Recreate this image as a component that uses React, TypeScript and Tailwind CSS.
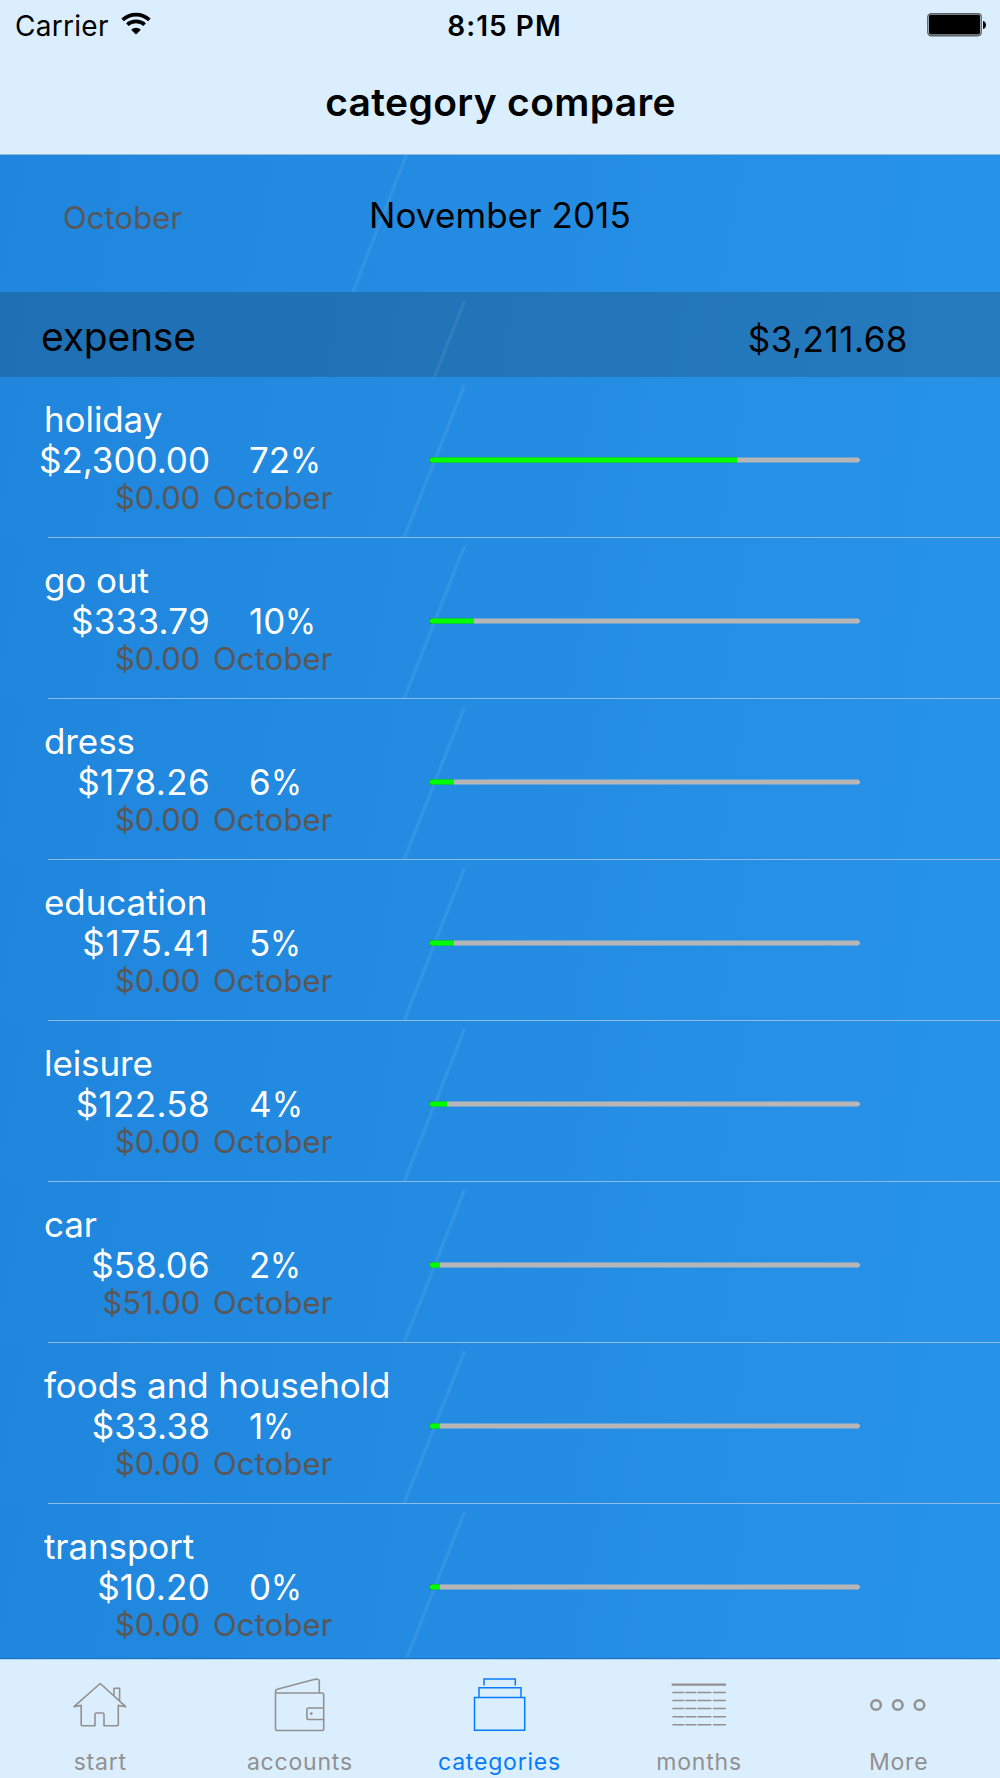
import React from "react";

type Category = {
  name: string;
  amount: string;
  percent: number;
  fill: number;
  previous: string;
  amountTracking: string;
};

const categories: Category[] = [
  { name: "holiday", amount: "$2,300.00", percent: 72, fill: 307, previous: "$0.00", amountTracking: "tracking-[-0.02px]" },
  { name: "go out", amount: "$333.79", percent: 10, fill: 44, previous: "$0.00", amountTracking: "tracking-[0.25px]" },
  { name: "dress", amount: "$178.26", percent: 6, fill: 24, previous: "$0.00", amountTracking: "tracking-[0.4px]" },
  { name: "education", amount: "$175.41", percent: 5, fill: 24, previous: "$0.00", amountTracking: "tracking-[0.7px]" },
  { name: "leisure", amount: "$122.58", percent: 4, fill: 17, previous: "$0.00", amountTracking: "tracking-[0.35px]" },
  { name: "car", amount: "$58.06", percent: 2, fill: 10, previous: "$51.00", amountTracking: "tracking-[0.2px]" },
  { name: "foods and household", amount: "$33.38", percent: 1, fill: 10, previous: "$0.00", amountTracking: "tracking-[0.17px]" },
  { name: "transport", amount: "$10.20", percent: 0, fill: 10, previous: "$0.00", amountTracking: "tracking-[0.24px]" },
];

/* Faint diagonal highlight of the wallpaper, repeated in every cell. */
function Streak({ d }: { d: string }) {
  return (
    <svg className="pointer-events-none absolute inset-0 h-full w-full" fill="none">
      <path d={d} stroke="#ffffff" strokeOpacity="0.075" strokeWidth="3.4" />
    </svg>
  );
}

function StatusBar() {
  return (
    <div className="grid h-[50px] grid-cols-3 text-[28px] leading-[50px]">
      <div className="flex pl-[15px] pt-px">
        <span className="tracking-[0.29px]">Carrier</span>
        <svg className="ml-[12px] mt-[11px]" width="30" height="24" viewBox="0 0 30 24" fill="none">
          <path d="M1.6 7.8C9.2 .9 20.8 .9 28.4 7.8" stroke="#000" strokeWidth="3.7" />
          <path d="M6.3 12.7C11.2 8.3 18.8 8.3 23.7 12.7" stroke="#000" strokeWidth="3.7" />
          <path d="M10.1 17.7C12.9 15 17.1 15 19.9 17.7L15 22.4Z" fill="#000" />
        </svg>
      </div>
      <div className="pl-[9px] pt-px text-center font-semibold tracking-[1.05px]">8:15 PM</div>
      <div className="flex justify-end pr-[14px]">
        <svg className="mt-[12px]" width="60" height="26" viewBox="0 0 60 26" fill="none">
          <rect x="1.8" y="1.7" width="53.4" height="22" rx="3.4" stroke="#5b6268" strokeWidth="1.4" />
          <rect x="3" y="2.8" width="51" height="19.8" rx="1.8" fill="#000" />
          <path d="M57 9C61 10 61 16 57 17Z" fill="#000" />
        </svg>
      </div>
    </div>
  );
}

function Row({ item }: { item: Category }) {
  return (
    <div className="relative flex h-[161px] shrink-0 bg-[linear-gradient(100deg,#2086dd,#2793e8)]">
      <Streak d="M464.5 8L404 161" />
      <div className="relative w-[430px] shrink-0 pt-[22px] text-[35px] text-white">
        <div className="whitespace-nowrap pl-[44px] leading-[40px] tracking-[-0.09px]">{item.name}</div>
        <div className="flex pt-px leading-[40px]">
          <div className={`w-[210px] text-right ${item.amountTracking}`}>{item.amount}</div>
          <div className="pl-[39px]">
            {item.percent}
            <span className="inline-block origin-left scale-x-90">%</span>
          </div>
        </div>
        <div className="flex text-[31px] leading-[36px] text-[#595757]">
          <div className="w-[200px] text-right tracking-[-0.2px]">{item.previous}</div>
          <div className="pl-[13px] tracking-[0.15px]">October</div>
        </div>
      </div>
      <div className="relative mt-[80px] flex h-[6px] w-[430px] bg-[#333f4a]">
        <div
          className="h-full rounded-l-[2px] border-y border-[#10c840] bg-[#00ff00]"
          style={{ width: item.fill }}
        />
        <div className="h-full flex-1 rounded-r-[2px] border-y border-[#6ca5d1] bg-[#b7b5b5]" />
      </div>
      <div className="absolute bottom-0 left-[48px] right-0 h-px bg-[#8ebce4]" />
    </div>
  );
}

function HomeIcon() {
  return (
    <svg width="60" height="60" viewBox="0 0 60 60" fill="none" stroke="currentColor" strokeWidth="1.6" strokeLinejoin="round">
      <path d="M30.2 9.5L4 32.7L11.2 31.4V50.7Q11.2 51.7 12.2 51.7H25V40.4Q25 39 26.4 39H32.6Q34 39 34 40.4V51.7H47.3Q48.3 51.7 48.3 50.7V31.4L55.7 32.7Z" />
      <path d="M44 21.3V14.2H49.6V26.8" />
    </svg>
  );
}

function WalletIcon() {
  return (
    <svg width="60" height="60" viewBox="0 0 60 60" fill="none" stroke="currentColor" strokeWidth="1.6" strokeLinejoin="round">
      <path d="M7 19H53Q54.7 19 54.7 20.7V54.8Q54.7 56.5 53 56.5H8.2Q6.5 56.5 6.5 54.8V17.5Q6.5 15.8 8.3 15.3L44 5.8Q50.3 4 50.3 7.3V19" />
      <path d="M54.7 34H39.6Q37.9 34 37.9 35.7V43.8Q37.9 45.5 39.6 45.5H54.7" />
      <circle cx="42.3" cy="39.6" r="1.4" fill="currentColor" stroke="none" />
    </svg>
  );
}

function CategoriesIcon() {
  return (
    <svg width="60" height="60" viewBox="0 0 60 60" fill="none" stroke="currentColor" strokeWidth="1.5">
      <path d="M5.5 23.5H55.7V56.2H5.5Z" />
      <path d="M10 23V13.7H52V23" />
      <path d="M15 11.5V5H46.3V11.5" />
    </svg>
  );
}

function MonthsIcon() {
  return (
    <svg width="60" height="60" viewBox="0 0 60 60" fill="none" stroke="currentColor" strokeWidth="1.5">
      <path d="M2.7 10.7H57" strokeWidth="2.2" />
      {[18.4, 26.5, 34.6, 42.7, 50.8].map((y) => (
        <g key={y} transform={`translate(0 ${y})`}>
          <path d="M3.4 0H15.4M16.4 0H27.4M28.4 0H42.4M44.1 0H57" />
        </g>
      ))}
    </svg>
  );
}

function MoreIcon() {
  return (
    <svg width="60" height="60" viewBox="0 0 60 60" fill="none" stroke="currentColor" strokeWidth="2.5">
      <circle cx="8.1" cy="31" r="4.8" />
      <circle cx="29.8" cy="31" r="4.8" />
      <circle cx="51.5" cy="31" r="4.8" />
    </svg>
  );
}

const tabs = [
  { label: "start", icon: <HomeIcon />, active: false },
  { label: "accounts", icon: <WalletIcon />, active: false },
  { label: "categories", icon: <CategoriesIcon />, active: true },
  { label: "months", icon: <MonthsIcon />, active: false },
  { label: "More", icon: <MoreIcon />, active: false },
];

export default function App() {
  return (
    <div className="flex h-[1778px] w-[1000px] flex-col overflow-hidden bg-[#2389e0] font-['Inter',sans-serif] text-black">
      <header className="h-[155px] shrink-0 border-b border-[#93bbd8] bg-[#dbeefd]">
        <StatusBar />
        <h1 className="pl-px pt-[27px] text-center text-[39px] font-semibold leading-[50px] tracking-[0.33px]">
          category compare
        </h1>
      </header>

      <div className="relative flex h-[137px] shrink-0 bg-[linear-gradient(100deg,#2086dd,#2793e8)]">
        <Streak d="M406.5 0L353 137" />
        <div className="relative w-[369px] pl-[63px] pt-[43px] text-[31px] leading-[40px] tracking-[0.1px] text-[#595757]">
          October
        </div>
        <div className="relative pt-[40px] text-[35px] leading-[40px] tracking-[0.1px]">November 2015</div>
      </div>

      <div className="relative flex h-[85px] shrink-0 justify-between bg-[linear-gradient(100deg,#1e6fb3,#257abe)] pl-[41px] pr-[92px]">
        <Streak d="M464.5 9L434.5 85" />
        <span className="relative pt-[20px] text-[39px] leading-[50px] tracking-[-0.2px]">expense</span>
        <span className="relative pt-[22px] text-[35px] leading-[50px] tracking-[0.5px]">$3,211.68</span>
      </div>

      <main className="flex min-h-0 flex-1 flex-col overflow-hidden">
        {categories.map((item) => (
          <Row key={item.name} item={item} />
        ))}
      </main>

      <nav className="h-[120px] shrink-0 border-t border-[#1673c0] bg-[#dbeefd]">
        <div className="grid w-[998px] grid-cols-5 border-t border-[#b5d6ef]">
          {tabs.map((tab) => (
            <div
              key={tab.label}
              className={
                tab.active
                  ? "flex flex-col items-center pt-[14px] text-[#077bff]"
                  : "flex flex-col items-center pt-[14px] text-[#929090]"
              }
            >
              {tab.icon}
              <span className="mt-[13px] pl-px text-[23px] leading-[30px] tracking-[0.8px]">{tab.label}</span>
            </div>
          ))}
        </div>
      </nav>
    </div>
  );
}
